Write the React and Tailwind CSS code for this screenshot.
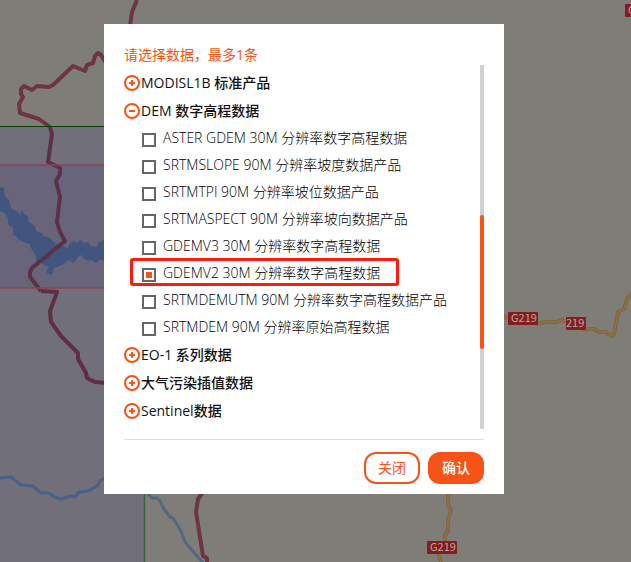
import { useState } from "react";

const PRODUCTS = [
  "ASTER GDEM 30M 分辨率数字高程数据",
  "SRTMSLOPE 90M 分辨率坡度数据产品",
  "SRTMTPI 90M 分辨率坡位数据产品",
  "SRTMASPECT 90M 分辨率坡向数据产品",
  "GDEMV3 30M 分辨率数字高程数据",
  "GDEMV2 30M 分辨率数字高程数据",
  "SRTMDEMUTM 90M 分辨率数字高程数据产品",
  "SRTMDEM 90M 分辨率原始高程数据",
];

const GROUPS = [
  { name: "MODISL1B 标准产品", items: [] },
  { name: "DEM 数字高程数据", items: PRODUCTS },
  { name: "EO-1 系列数据", items: [] },
  { name: "大气污染插值数据", items: [] },
  { name: "Sentinel数据", items: [] },
];

const ROADS = [
  "M500 315L504 316L508 319",
  "M536 324L545 322L557 322L561 320L566 321",
  "M582 329L594 329L599 332L606 332L612 336L614 334L618 312L624 309L627 299L632 293",
  "M450 492L448 496V505L451 510L448 520V531L445 535V542",
  "M438 552L441 563",
];

function RoadSign({ x, y, width, textX, children }) {
  return (
    <g>
      <rect x={x} y={y} width={width} height="13" rx="1" fill="#851d20" />
      <text
        x={textX}
        y={y + 10}
        fontSize="11"
        fill="#b5a8a2"
        className="font-['Noto_Sans_CJK_SC',sans-serif]"
      >
        {children}
      </text>
    </g>
  );
}

function MapBackground() {
  return (
    <svg
      viewBox="0 0 631 562"
      preserveAspectRatio="xMinYMin slice"
      className="absolute inset-0 size-full"
      fill="none"
      strokeLinejoin="round"
      aria-hidden="true"
    >
      <rect width="631" height="562" fill="#7f7d78" />
      <path d="M0 127H145V562H0Z" fill="#716f79" />
      <path d="M0 165H145V288H0Z" fill="#68657b" />
      <path
        d="M0 187L4 188L5 196L9 200L10 206L13 210L17 211L20 215L22 210L24 214L28 216L29 222L35 226L36 231L41 233L44 236L50 238L55 243L62 246L68 248L70 243L74 241L77 243L80 240L84 243L88 242L91 246L97 247L98 242L104 240V261L100 259L96 263L91 260L88 261L83 258L82 255L78 257L74 263L68 260L64 264L57 267L54 268L53 273L50 275L46 272L49 267L45 265L40 262L36 264V256L32 250L29 244L23 242L19 240L16 236L13 235V228L8 224L8 218L5 213L0 211Z"
        fill="#42557f"
      />
      <g stroke="#48608a" strokeWidth="3">
        <path d="M0 478L11 477L21 485L33 486L41 493H49L54 497L61 499L70 496L75 497L79 492L88 491L97 486L100 481L106 477" />
        <path stroke="#526880" d="M146 492L152 498H157L160 501L164 509L170 517L173 518L181 531L185 542L203 563" />
      </g>
      <g stroke="#6e3541" strokeWidth="4">
        <path d="M137 0L132 12L130 26" />
        <path d="M106 63L101 55L98 53L95 56L93 63L87 65L85 71L73 66L53 85L49 87L37 86L32 90L24 86L21 89V94L23 97L19 104L20 113L39 119L50 127" />
        <path stroke="#5d2f49" d="M50 127L52 134L48 162L60 168V174L56 181L60 197L57 222L60 232L65 241L32 268L30 272V277L41 291" />
        <path stroke="#602e43" d="M41 291L57 292L50 311L51 322L61 336L78 353V359L86 373L87 378L95 382L106 383" />
        <path d="M203 492L198 499L196 512L203 556L207 558V563" />
      </g>
      <path d="M0 126.500H145" stroke="#063f08" />
      <path d="M0 165H145M0 288H145" stroke="#8a4650" strokeWidth="1.500" />
      <path d="M144.500 126V562" stroke="#386440" strokeWidth="1.500" />
      {ROADS.map((d) => (
        <g key={d}>
          <path d={d} stroke="#83683f" strokeWidth="4" />
          <path d={d} stroke="#907553" strokeWidth="1" />
        </g>
      ))}
      <RoadSign x={508} y={312} width={30} textX={511}>G219</RoadSign>
      <RoadSign x={566} y={317} width={20} textX={566}>219</RoadSign>
      <RoadSign x={427} y={541} width={30} textX={430}>G219</RoadSign>
      <RoadSign x={625} y={4} width={30} textX={628}>G219</RoadSign>
    </svg>
  );
}

function ToggleIcon({ open }) {
  return (
    <svg viewBox="0 0 16 16" className="size-4 shrink-0" fill="none" stroke="#f75316" strokeWidth="2" aria-hidden="true">
      <circle cx="8" cy="8" r="7" />
      <path d={open ? "M5 8H11" : "M5 8H11M8 5V11"} />
    </svg>
  );
}

function ProductRow({ name, checked, onToggle }) {
  return (
    <li className="relative h-[27px]">
      <label className="flex h-full items-center gap-[7px] pb-0.5 pl-[18px] font-light whitespace-nowrap text-black">
        <input
          type="checkbox"
          checked={checked}
          onChange={onToggle}
          className="mt-1 size-3.5 shrink-0 appearance-none border-2 border-[#666] bg-white bg-clip-content p-0.5 checked:bg-[#f75316]"
        />
        {name}
      </label>
      {checked && (
        <span className="pointer-events-none absolute -top-0.5 left-1.5 h-7 w-[269px] rounded-[3px] border-3 border-[#ff1a0e]" />
      )}
    </li>
  );
}

export default function App() {
  const [selected, setSelected] = useState("GDEMV2 30M 分辨率数字高程数据");
  const [expanded, setExpanded] = useState("DEM 数字高程数据");

  return (
    <main className="relative min-h-screen overflow-hidden px-[104px] py-6 font-['Open_Sans','Noto_Sans_CJK_SC',sans-serif] text-sm">
      <MapBackground />
      <section
        role="dialog"
        aria-labelledby="dialog-title"
        className="relative w-[400px] bg-white px-5 pt-5 pb-2.5"
      >
        <h1 id="dialog-title" className="h-[21px] leading-[21px] text-[#f75316]">
          请选择数据，最多1条
        </h1>
        <div className="flex">
          <ul className="min-w-0 flex-1 py-1">
            {GROUPS.map((group) => {
              const open = expanded === group.name;
              return (
                <li key={group.name}>
                  <button
                    type="button"
                    aria-expanded={open}
                    onClick={() => setExpanded(open ? "" : group.name)}
                    className="flex h-7 items-center gap-px font-medium text-[#111]"
                  >
                    <ToggleIcon open={open} />
                    {group.name}
                  </button>
                  {open && (
                    <ul>
                      {group.items.map((name) => (
                        <ProductRow
                          key={name}
                          name={name}
                          checked={selected === name}
                          onToggle={() => setSelected(selected === name ? "" : name)}
                        />
                      ))}
                    </ul>
                  )}
                </li>
              );
            })}
          </ul>
          <div className="w-1 bg-[#d1d1d1] pt-[150px]">
            <div className="h-[134px] rounded-xs bg-[#f75316]" />
          </div>
        </div>
        <footer className="mt-2.5 flex justify-end gap-2 border-t border-[#dcdfdf] pt-3">
          <button type="button" className="h-8 w-14 rounded-xl border-2 border-[#f75316] text-[#f75316]">
            关闭
          </button>
          <button type="button" className="h-8 w-14 rounded-xl bg-[#f75316] font-medium text-white">
            确认
          </button>
        </footer>
      </section>
    </main>
  );
}
